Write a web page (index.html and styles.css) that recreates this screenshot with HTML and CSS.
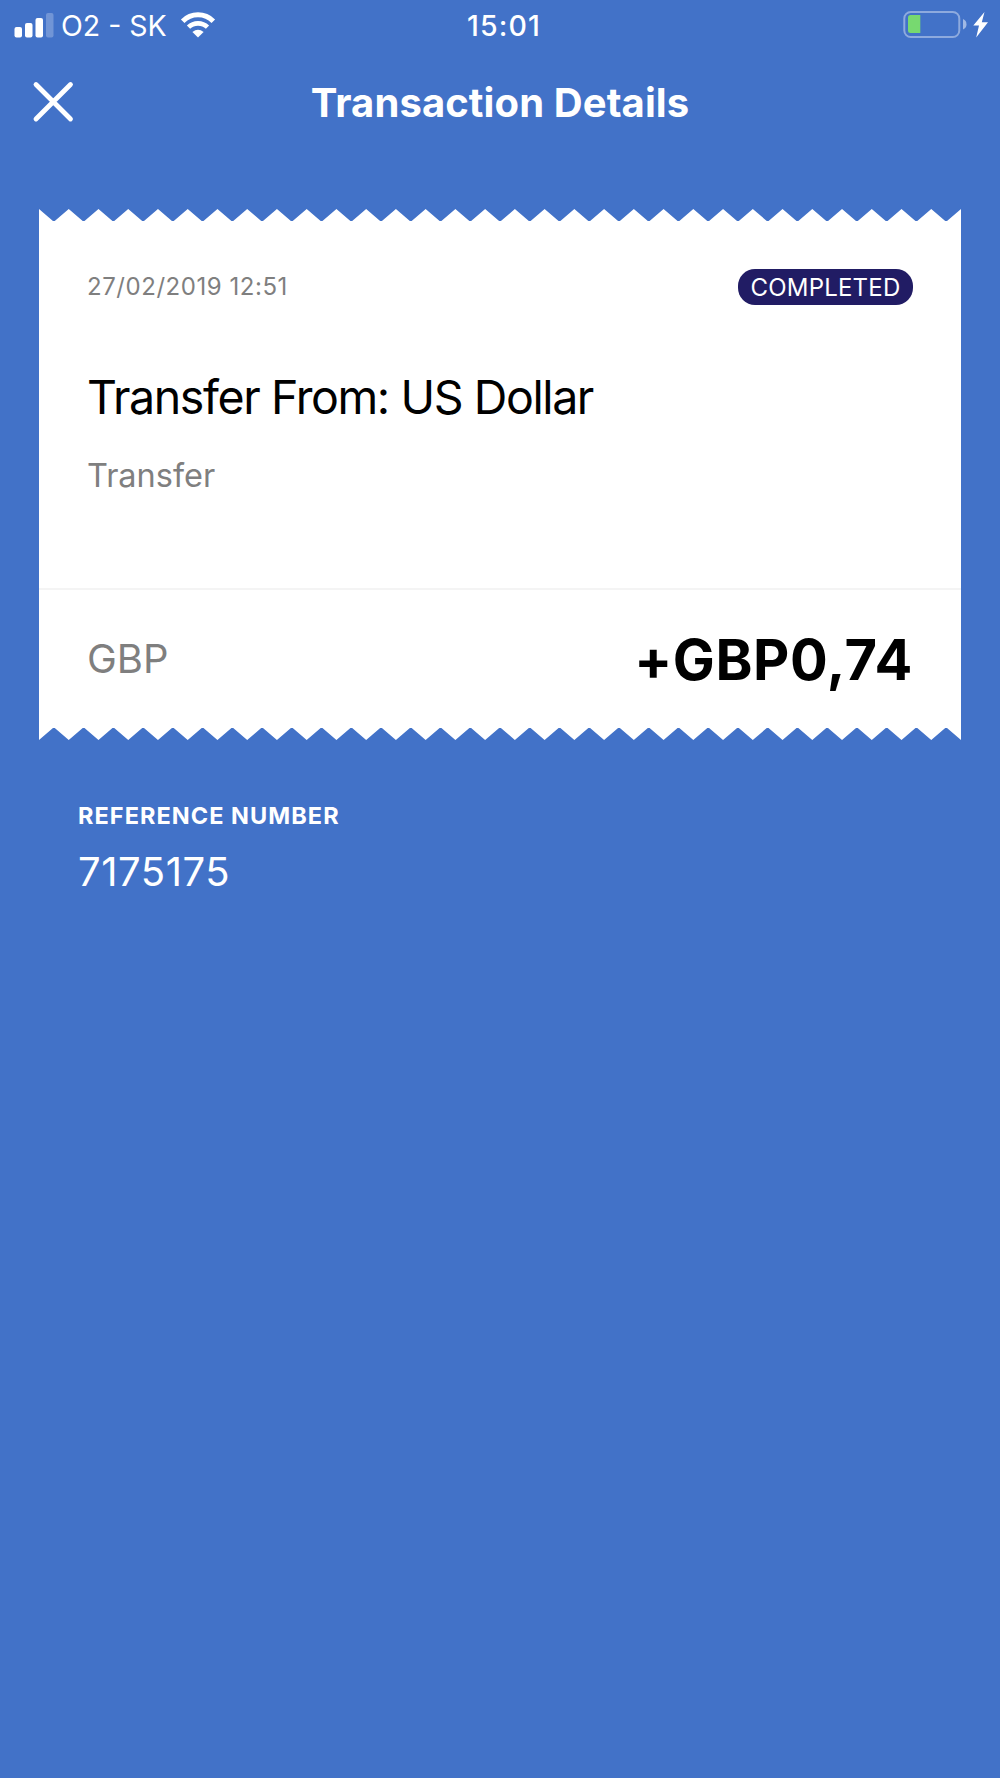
FILE: index.html
```html
<!DOCTYPE html>
<html lang="en">
<head>
  <meta charset="UTF-8">
  <title>Transaction Details</title>
  <meta name="viewport" content="width=device-width, initial-scale=1.0">
  <link rel="stylesheet" href="styles.css">
</head>
<body>
  <div class="status-bar">
    <div class="status-left">
      <svg class="signal-icon" width="40" height="26" viewBox="0 0 40 26" fill="#fff">
        <rect x="0.5" y="15" width="7.5" height="10.5" rx="2"/>
        <rect x="11" y="11" width="7.5" height="14.5" rx="2"/>
        <rect x="21.5" y="6" width="7.5" height="19.5" rx="2"/>
        <rect x="32" y="1" width="7.5" height="24.5" rx="2" opacity="0.25"/>
      </svg>
      <span class="carrier">O2 - SK</span>
      <svg class="wifi-icon" width="36" height="26" viewBox="0 0 36 26">
        <path d="M2.700 9.200A21.600 21.600 0 0 1 33.300 9.200" fill="none" stroke="#fff" stroke-width="5"/>
        <path d="M8.500 15.200A13.600 13.600 0 0 1 27.500 15.200" fill="none" stroke="#fff" stroke-width="4.600"/>
        <path d="M12.400 20Q18 15.600 23.600 20L18 25.500Z" fill="#fff"/>
      </svg>
    </div>
    <div class="status-time">15:01</div>
    <div class="status-right">
      <svg width="88" height="30" viewBox="0 0 88 30">
        <rect x="4.300" y="3" width="55" height="25" rx="6.500" fill="none" stroke="#fff" stroke-opacity="0.4" stroke-width="2"/>
        <path d="M10.500 6H20.300V24H10.500Q8 24 8 21.500V8.500Q8 6 10.500 6Z" fill="#77d970"/>
        <path d="M63 10Q66.500 11.500 66.500 15.200T63 20.500Z" fill="#fff" opacity="0.5"/>
        <path d="M84.500 3L73.300 16.500H79L76.200 28.500L88 13.300H81.800Z" fill="#fff"/>
      </svg>
    </div>
  </div>

  <div class="header">
    <svg class="close-icon" width="42" height="42" viewBox="0 0 42 42" fill="none" stroke="#fff" stroke-width="4.800" stroke-linecap="round">
      <path d="M4 3.500L38.500 38M38.500 3.500L4 38"/>
    </svg>
    <h1 class="header-title">Transaction Details</h1>
  </div>

  <div class="receipt">
    <svg class="receipt-edge" viewBox="0 0 310 12" preserveAspectRatio="none">
      <path d="M0 12V0l4.700 12h.6l4.700-12l4.700 12h.6l4.700-12l4.700 12h.6l4.700-12l4.700 12h.6l4.700-12l4.700 12h.6l4.700-12l4.700 12h.6l4.700-12l4.700 12h.6l4.700-12l4.700 12h.6l4.700-12l4.700 12h.6l4.700-12l4.700 12h.6l4.700-12l4.700 12h.6l4.700-12l4.700 12h.6l4.700-12l4.700 12h.6l4.700-12l4.700 12h.6l4.700-12l4.700 12h.6l4.700-12l4.700 12h.6l4.700-12l4.700 12h.6l4.700-12l4.700 12h.6l4.700-12l4.700 12h.6l4.700-12l4.700 12h.6l4.700-12l4.700 12h.6l4.700-12l4.700 12h.6l4.700-12l4.700 12h.6l4.700-12l4.700 12h.6l4.700-12l4.700 12h.6l4.700-12l4.700 12h.6l4.700-12l4.700 12h.6l4.700-12l4.700 12h.6l4.700-12l4.700 12h.6l4.700-12l4.700 12h.6l4.700-12l4.700 12h.6l4.700-12V12Z" id="teeth" fill="#fff"/>
    </svg>
    <div class="receipt-body">
      <div class="receipt-meta">
        <span class="receipt-date">27/02/2019 12:51</span>
        <span class="receipt-badge"><span class="receipt-badge-text">COMPLETED</span></span>
      </div>
      <h2 class="receipt-title">Transfer From: US Dollar</h2>
      <p class="receipt-type">Transfer</p>
    </div>
    <div class="receipt-total">
      <span class="receipt-currency">GBP</span>
      <span class="receipt-amount">+GBP0,74</span>
    </div>
    <svg class="receipt-edge receipt-edge-bottom" viewBox="0 0 310 12" preserveAspectRatio="none">
      <use href="#teeth"/>
    </svg>
  </div>

  <div class="reference">
    <div class="reference-label">REFERENCE NUMBER</div>
    <div class="reference-number">7175175</div>
  </div>
</body>
</html>
```
FILE: styles.css
```css
body {
  font-family: Inter, 'Liberation Sans', sans-serif;
  background: #4272c8;
  color: #fff;
  margin: 0;
  min-height: 1778px;
}
h1, h2, p {
  margin: 0;
  font-weight: 400;
}
svg {
  display: block;
}
.status-bar {
  display: grid;
  grid-template-columns: 1fr auto 1fr;
  align-items: center;
  height: 50px;
  padding: 0 12px 0 14px;
}
.status-left {
  display: flex;
  align-items: center;
}
.signal-icon {
  margin-top: -2px;
}
.carrier {
  font-size: 28.5px;
  line-height: 50px;
  margin-left: 7px;
  padding-top: 1px;
}
.wifi-icon {
  margin: -2px 0 0 13px;
}
.status-time {
  font-size: 28.5px;
  font-weight: 500;
  letter-spacing: 1.1px;
  line-height: 50px;
  padding: 1px 0 0 6px;
}
.status-right {
  justify-self: end;
  margin-top: -4px;
}
.header {
  display: grid;
  grid-template-columns: 42px 1fr 42px;
  align-items: center;
  height: 105px;
  padding: 0 32px;
}
.close-icon {
  margin-top: -1px;
}
.header-title {
  font-size: 40px;
  font-weight: 700;
  letter-spacing: 0.1px;
  text-align: center;
}
.receipt {
  margin: 54px 39px 0;
}
.receipt-edge {
  width: 100%;
  height: 12px;
}
.receipt-edge-bottom {
  transform: scaleY(-1);
}
.receipt-body {
  background: #fff;
  height: 319px;
  padding: 48px 48px 0;
}
.receipt-meta {
  display: flex;
  justify-content: space-between;
  align-items: center;
}
.receipt-date {
  color: #7f7f7f;
  font-size: 24px;
  letter-spacing: 0.55px;
  padding-bottom: 2px;
}
.receipt-badge {
  display: flex;
  align-items: center;
  justify-content: center;
  width: 175px;
  height: 36px;
  border-radius: 17px;
  background: #211c64;
}
.receipt-badge-text {
  font-size: 24px;
  letter-spacing: 0.2px;
}
.receipt-title {
  color: #000;
  font-size: 46.5px;
  letter-spacing: -1.4px;
  line-height: 60px;
  margin-top: 62px;
}
.receipt-type {
  color: #7f7f7f;
  font-size: 32.5px;
  line-height: 40px;
  margin-top: 29px;
}
.receipt-total {
  display: flex;
  justify-content: space-between;
  align-items: center;
  height: 138px;
  padding: 0 48px;
  background: #fff;
  border-top: 2px solid #f4f4f4;
}
.receipt-currency {
  color: #7f7f7f;
  font-size: 40px;
  padding-bottom: 1px;
}
.receipt-amount {
  color: #000;
  font-size: 56px;
  font-weight: 700;
  letter-spacing: 0.6px;
  padding-top: 1px;
}
.reference {
  padding: 61px 78px 0;
}
.reference-label {
  font-size: 23.5px;
  font-weight: 700;
  letter-spacing: 1.05px;
  line-height: 30px;
}
.reference-number {
  font-size: 40px;
  letter-spacing: 0.55px;
  line-height: 48px;
  margin-top: 17px;
}
```
